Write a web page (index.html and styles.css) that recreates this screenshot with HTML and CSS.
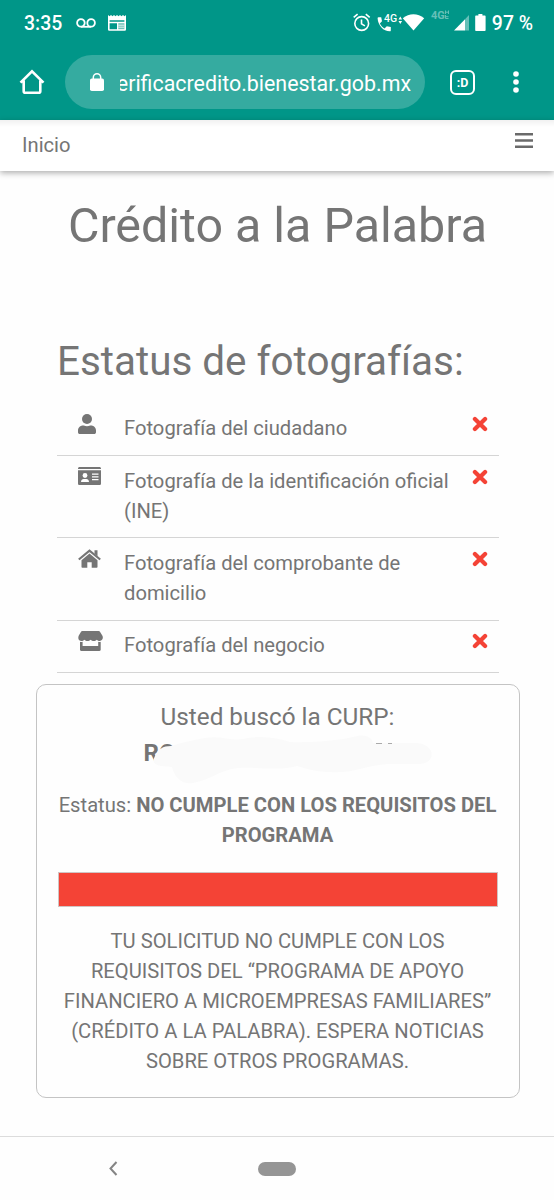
FILE: index.html
```
<!DOCTYPE html>
<html lang="es">
<head>
  <meta charset="UTF-8" />
  <meta name="viewport" content="width=device-width, initial-scale=1.0"/>
  <title>Crédito a la Palabra</title>
  <link rel="stylesheet" href="styles.css">
</head>
<body>

  <header class="browser">
    <div class="status-bar">
      <span class="clock">3:35</span>
      <svg class="icon-voicemail" width="20" height="10" viewBox="0 0 20 10" fill="none" stroke="#fff" stroke-width="1.8">
        <circle cx="4.9" cy="4.9" r="3.8"/>
        <circle cx="15.1" cy="4.9" r="3.8"/>
        <path d="M4.9 8.8h10.2"/>
      </svg>
      <svg class="icon-news" width="18" height="16" viewBox="0 0 18 16">
        <path fill="#fff" fill-rule="evenodd" d="M0 0l1.5 1.2L3 0l1.5 1.2L6 0l1.5 1.2L9 0l1.5 1.2L12 0l1.5 1.2L15 0l1.5 1.2L18 0v14.5a1.2 1.2 0 0 1-1.2 1.2H1.2A1.2 1.2 0 0 1 0 14.5zM1.600 5.200v1.600h14.800V5.200zM1.600 8.200v6h7.400v-6z"/>
        <path fill="#6fc1b9" d="M10.300 8.200h6.100v6h-6.100z"/>
        <path stroke="#fff" stroke-width=".8" d="M10.300 10.200h6.100M10.300 12.200h6.100"/>
      </svg>

      <!-- system icons -->
      <svg class="icons-right" width="136" height="26" viewBox="0 0 136 26">
        <g fill="none" stroke="#fff" stroke-width="1.6">
          <circle cx="9.700" cy="13.500" r="6.900"/>
          <path d="M9.500 9.400v4.500l3.400 2M1.700 7.400l3.900-3.300M17.700 7.400l-3.900-3.300"/>
        </g>
        <path fill="#fff" d="M26.500 7.200h2.700l.8 4-2.200 2.200c1.300 2.400 2.700 3.800 4.700 5l2.300-2.200 4 .9v3.300c0 .6-.4.900-1 .9C31.500 21.300 26 15.500 25.600 8.200c0-.6.300-1 .900-1z"/>
        <text class="net" x="32" y="12.400">4G</text>
        <path fill="#fff" d="M46.500 9.500l1.800-3 1.800 3zM46.500 11l1.800 3 1.800-3z"/>
        <path fill="#fff" d="M50.800 8.300c6.300-5.300 14.900-5.300 21.400 0L61.500 20.400z"/>
        <text class="net-off" x="79" y="9">4G</text>
        <path stroke="#66c0b8" stroke-width="1" fill="none" d="M93.500 .5v3.500M93.500 2.200h3M96.500 .5v3.500M93.500 5v3.500h3M93.500 6.700h3"/>
        <path fill="#fff" d="M102 20.500L113 9.200v11.300z"/>
        <path fill="#66c0b8" d="M113 9.200l4-4.300v15.600h-4z"/>
        <path fill="#fff" d="M126.400 4h4v1.500h2.200c.6 0 1 .4 1 1V20c0 .6-.4 1-1 1h-8.400c-.6 0-1-.4-1-1V6.500c0-.6.400-1 1-1h2.200z"/>
      </svg>
      <span class="battery">97 %</span>
    </div>

    <div class="toolbar">
      <svg class="icon-home" width="26" height="26" viewBox="0 0 26 26" fill="none" stroke="#fff" stroke-width="2.600">
        <path d="M1.500 13.700L13 2.300l11.500 11.400M4.700 11.500v10.800c0 .9.600 1.500 1.500 1.500h13.600c.9 0 1.500-.6 1.500-1.500V11.500"/>
      </svg>
      <div class="url-bar">
        <svg width="14" height="18" viewBox="0 0 14 18">
          <rect x="0" y="5.500" width="14" height="12.500" rx="1.800" fill="#fff"/>
          <path d="M3.300 7V4.500a3.700 3.700 0 0 1 7.400 0V7" fill="none" stroke="#fff" stroke-width="1.500"/>
        </svg>
        <div class="url"><span>erificacredito.bienestar.gob.mx</span></div>
      </div>
      <div class="tabs">:D</div>
      <svg class="icon-more" width="6" height="22" viewBox="0 0 6 22" fill="#fff">
        <circle cx="3" cy="3" r="2.800"/>
        <circle cx="3" cy="11" r="2.800"/>
        <circle cx="3" cy="19" r="2.800"/>
      </svg>
    </div>
  </header>

  <nav class="navbar">
    <a class="nav-link">Inicio</a>
    <svg class="menu-button" width="18" height="17" viewBox="0 0 18 17">
      <path stroke="#6a6a6a" stroke-width="2.400" d="M0 2.200h18M0 8.500h18M0 14.800h18"/>
    </svg>
  </nav>

  <main>
    <h1>Crédito a la Palabra</h1>

    <section class="photos">
      <h2>Estatus de fotografías:</h2>
      <ul>
        <li>
          <div class="photo-icon">
            <svg width="18" height="20" viewBox="0 0 18 20" fill="#757575">
              <circle cx="9" cy="5" r="5"/>
              <path d="M5 11.500h.8c2 .9 4.400.9 6.400 0h.8c2.800 0 5 2.200 5 5V18.200c0 1-.8 1.800-1.800 1.800H1.800C.8 20 0 19.200 0 18.200V16.500c0-2.800 2.200-5 5-5z"/>
            </svg>
          </div>
          <span>Fotografía del ciudadano</span>
          <svg class="cross" width="16" height="16" viewBox="0 0 16 16"><path d="M2.900 2.900l10.200 10.200M13.100 2.900L2.900 13.100"/></svg>
        </li>
        <li>
          <div class="photo-icon">
            <svg width="23" height="18" viewBox="0 0 23 18">
              <path fill="#757575" d="M1.600 0h19.800c.9 0 1.600.7 1.600 1.600V2H0v-.4C0 .7.700 0 1.600 0zM0 3.200h23v13.200c0 .9-.7 1.600-1.600 1.600H1.600C.7 18 0 17.300 0 16.400z"/>
              <circle cx="7" cy="8.500" r="2.400" fill="#fff"/>
              <path fill="#fff" d="M3 15c0-2 1.200-3 2.700-3h2.600c1.500 0 2.700 1 2.700 3z"/>
              <path stroke="#fff" stroke-width="1.200" d="M14 7.200h6.500M14 9.900h6.500M14 12.600h6.500"/>
            </svg>
          </div>
          <span>Fotografía de la identificación oficial (INE)</span>
          <svg class="cross" width="16" height="16" viewBox="0 0 16 16"><path d="M2.900 2.900l10.200 10.200M13.100 2.900L2.900 13.100"/></svg>
        </li>
        <li>
          <div class="photo-icon">
            <svg width="23" height="19" viewBox="0 0 23 19">
              <path fill="none" stroke="#757575" stroke-width="2.200" d="M.8 10.500L11.500 1.600l10.700 8.900"/>
              <path fill="#757575" d="M16.500 1.200h3v6l-3-2.500zM3.500 11.200l8-6.600 8 6.600v6.700c0 .5-.3.800-.8.800h-5v-5.500H9.300v5.500h-5c-.5 0-.8-.3-.8-.8z"/>
            </svg>
          </div>
          <span>Fotografía del comprobante de domicilio</span>
          <svg class="cross" width="16" height="16" viewBox="0 0 16 16"><path d="M2.900 2.900l10.200 10.200M13.100 2.900L2.900 13.100"/></svg>
        </li>
        <li>
          <div class="photo-icon">
            <svg width="25" height="20" viewBox="0 0 25 20" fill="#757575">
              <path d="M4.300 0h16.400c.5 0 .9.200 1.100.6l2.500 4c1.300 2.200.2 5.400-2.500 5.400-1.200 0-2.200-.5-3-1.300-1.500 1.700-4.500 1.700-6.200 0-1.600 1.700-4.600 1.700-6.200 0C4 11.200.300 9.800.300 7c0-.8.100-1.600.5-2.400l2.400-4C3.400.2 3.800 0 4.300 0z"/>
              <path d="M2 10.800c.9.300 1.800.2 2.600 0V15h15.600v-4.200c.8.200 1.700.3 2.500 0v8c0 .7-.5 1.200-1.200 1.200H3.200c-.7 0-1.200-.5-1.200-1.200z"/>
            </svg>
          </div>
          <span>Fotografía del negocio</span>
          <svg class="cross" width="16" height="16" viewBox="0 0 16 16"><path d="M2.900 2.900l10.200 10.200M13.100 2.900L2.900 13.100"/></svg>
        </li>
      </ul>
    </section>

    <section class="result">
      <h3>Usted buscó la CURP:</h3>
      <div class="curp">
        <strong>RO</strong>
        <svg class="curp-cover" width="290" height="52" viewBox="0 0 290 52">
          <path fill="#fafafa" d="M10 22C13 15 18 12 26 12C36 9 47 6 60 4C74 1 86 7 98 5C116 1 132 4 145 8C170 9 195 6 208 3C219-1 227 3 228 9H270C291 9 292 30 274 30H243C223 31 210 38 195 38C178 39 165 36 152 32C136 37 117 33 93 34C75 36 65 46 48 49C36 51 29 42 27 33C19 32 4 33 10 22z"/>
          <path stroke="#aaa" stroke-width="1" d="M231 9.500h6M243 9.500h4"/>
        </svg>
      </div>
      <p class="status">Estatus: <strong>NO CUMPLE CON LOS REQUISITOS DEL PROGRAMA</strong></p>
      <div class="status-color"></div>
      <p class="message">TU SOLICITUD NO CUMPLE CON LOS REQUISITOS DEL “PROGRAMA DE APOYO FINANCIERO A MICROEMPRESAS FAMILIARES” (CRÉDITO A LA PALABRA). ESPERA NOTICIAS SOBRE OTROS PROGRAMAS.</p>
    </section>
  </main>

  <footer class="system-nav">
    <svg width="9" height="15" viewBox="0 0 9 15" fill="none" stroke="#858585" stroke-width="2"><path d="M7.500 1L1.500 7.500l6 6.500"/></svg>
    <div class="home-pill"></div>
  </footer>

</body>
</html>
```
FILE: styles.css
```
* {
  box-sizing: border-box;
}

body {
  margin: 0;
  height: 1200px;
  display: flex;
  flex-direction: column;
  overflow: hidden;
  font-family: Roboto, sans-serif;
  font-size: 20.2px;
  line-height: 30px;
  color: #757575;
  background-color: #fefefe;
}

svg {
  display: block;
  flex-shrink: 0;
}

h1, h2, h3, p, ul {
  margin: 0;
  padding: 0;
  font-weight: 400;
}

.browser {
  height: 120px;
  background-color: #009688;
  color: #fff;
}

.status-bar {
  height: 46px;
  display: flex;
  align-items: center;
  padding: 0 21px 0 24px;
  font-size: 19.4px;
}

.clock,
.battery {
  padding-top: 2px;
  font-weight: 500;
}

.icon-voicemail {
  margin-left: 14px;
}

.icon-news {
  margin-left: 12px;
}

.icons-right {
  margin-left: auto;
}

.battery {
  margin-left: 4px;
  white-space: nowrap;
}

.net {
  font-size: 10.5px;
  font-weight: 500;
  fill: #fff;
}

.net-off {
  font-size: 11px;
  font-weight: 700;
  fill: #66c0b8;
}

.toolbar {
  height: 74px;
  display: flex;
  align-items: center;
  padding: 0 35px 2px 19px;
}

.url-bar {
  width: 360px;
  height: 54px;
  margin-left: 20px;
  padding: 0 14px 0 25px;
  display: flex;
  align-items: center;
  gap: 16px;
  border-radius: 27px;
  background-color: #35aba0;
}

/* long hosts keep their right end visible */
.url {
  flex: 1;
  display: flex;
  justify-content: flex-end;
  overflow: hidden;
  padding-top: 3px;
  font-size: 21.4px;
  white-space: nowrap;
}

.tabs {
  width: 25px;
  height: 25px;
  margin-left: 25px;
  border: 2.5px solid #fff;
  border-radius: 6px;
  font-size: 12.5px;
  font-weight: 700;
  line-height: 21px;
  text-align: center;
}

.icon-more {
  margin-left: auto;
}

.navbar {
  height: 51px;
  display: flex;
  justify-content: space-between;
  padding: 10px 21px 0 22px;
  background: linear-gradient(#f1f1f1, #fff 7px);
  box-shadow: 0 2px 6px rgba(0,0,0,0.32);
}

.menu-button {
  margin-top: 2px;
}

main {
  flex: 1;
  padding: 0 34.5px 0 35.5px;
}

h1 {
  padding-top: 25px;
  font-size: 48.4px;
  line-height: 60px;
  text-align: center;
}

.photos {
  padding: 76px 20.5px 0 21.5px;
}

h2 {
  font-size: 40.4px;
  line-height: 60px;
}

.photos ul {
  padding-top: 12px;
  list-style: none;
}

.photos li {
  display: flex;
  padding: 9.4px 11px 11.8px 21px;
  border-bottom: 1px solid #d5d5d5;
}

.photo-icon {
  width: 46px;
  padding-top: 1px;
  flex-shrink: 0;
}

.photos span {
  flex: 1;
}

.cross {
  margin-top: 3px;
  fill: none;
  stroke: #f44336;
  stroke-width: 4.2;
  stroke-linecap: round;
}

.result {
  height: 414px;
  margin-top: 11px;
  padding: 14px 21px 0;
  border: 1.5px solid #c4c4c4;
  border-radius: 10px;
  text-align: center;
}

h3 {
  font-size: 24.3px;
  line-height: 36px;
}

.curp {
  position: relative;
  height: 36px;
  padding-left: 86px;
  font-size: 24px;
  line-height: 36px;
  text-align: left;
}

.curp-cover {
  position: absolute;
  left: 87px;
  top: -1px;
}

.status {
  margin: 19px -4px 0;
}

.status-color {
  height: 35px;
  margin-top: 22px;
  border: 1px solid #d0c4c3;
  background-color: #f44336;
}

.message {
  margin-top: 19px;
}

.system-nav {
  height: 64px;
  display: flex;
  align-items: center;
  padding-left: 109px;
  border-top: 1px solid #dcdcdc;
}

.home-pill {
  width: 38px;
  height: 14px;
  margin-left: 140px;
  border-radius: 7px;
  background-color: #959595;
}
```
